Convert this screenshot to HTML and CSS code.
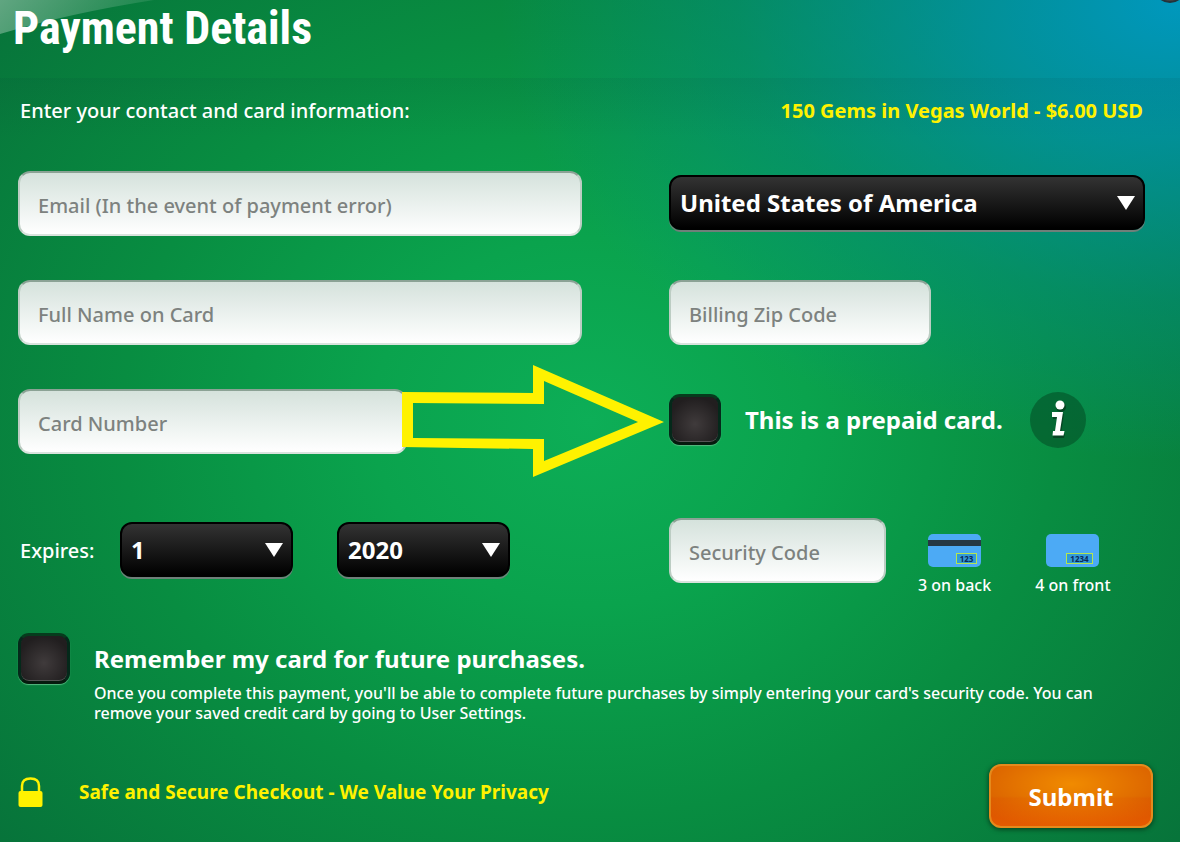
FILE: index.html
```html
<!DOCTYPE html>
<html lang="en">
<head>
<meta charset="utf-8">
<meta name="viewport" content="width=device-width, initial-scale=1">
<title>Payment Details</title>
<link rel="stylesheet" href="styles.css">
</head>
<body>
<main class="dialog">
  <svg class="shine" viewBox="0 0 160 36" aria-hidden="true">
    <defs><linearGradient id="shine" x1="0" y1="0" x2="1" y2="0.2"><stop offset="0" stop-color="#fff" stop-opacity=".36"/><stop offset="1" stop-color="#fff" stop-opacity=".08"/></linearGradient></defs>
    <path d="M0 0H154Q70 13 0 34Z" fill="url(#shine)"/>
  </svg>
  <button class="close" type="button" aria-label="Close"></button>
  <header class="dialog-header">
    <h1 class="title">Payment Details</h1>
  </header>
  <form class="form">
    <div class="intro">
      <p class="lead">Enter your contact and card information:</p>
      <p class="highlight">150 Gems in Vegas World - $6.00 USD</p>
    </div>
    <div class="fields">
      <input class="field" type="email" aria-label="Email" placeholder="Email (In the event of payment error)">
      <div class="select-box country">
        <select class="select" aria-label="Country"><option>United States of America</option></select>
        <svg class="caret" viewBox="0 0 18 14" aria-hidden="true"><path d="M0 0H18L9 14Z"/></svg>
      </div>
      <input class="field" type="text" aria-label="Full Name on Card" placeholder="Full Name on Card">
      <input class="field zip" type="text" aria-label="Billing Zip Code" placeholder="Billing Zip Code">
      <div class="number-cell">
        <input class="field number" type="text" aria-label="Card Number" placeholder="Card Number">
        <svg class="pointer" viewBox="0 0 262 112" aria-hidden="true"><path fill-rule="evenodd" d="M0 27L131 28V0L262 57L131 112V84L0 82ZM11 38V73L142 74V96L236 57L142 16V39Z"/></svg>
      </div>
      <div class="prepaid">
        <label class="check-label"><input class="check" type="checkbox">This is a prepaid card.</label>
        <button class="info" type="button" aria-label="About prepaid cards">
          <svg viewBox="0 0 56 56" aria-hidden="true"><g class="info-shadow" transform="translate(1 2)"><circle cx="30" cy="13" r="5"/><path d="M22 20H33L30 40H34L33 44H22L23 39H25L27 25H22Z"/></g><g class="info-mark"><circle cx="30" cy="13" r="4.500"/><path d="M22 20H33L30 39H34.500L33.500 43.500H22.500L23 39H25L27 25H22Z"/></g></svg>
        </button>
      </div>
      <div class="expiry">
        <span class="lead">Expires:</span>
        <div class="select-box">
          <select class="select" aria-label="Expiry month"><option>1</option></select>
          <svg class="caret" viewBox="0 0 18 14" aria-hidden="true"><path d="M0 0H18L9 14Z"/></svg>
        </div>
        <div class="select-box">
          <select class="select" aria-label="Expiry year"><option>2020</option></select>
          <svg class="caret" viewBox="0 0 18 14" aria-hidden="true"><path d="M0 0H18L9 14Z"/></svg>
        </div>
      </div>
      <div class="security">
        <input class="field code" type="text" aria-label="Security Code" placeholder="Security Code">
        <div class="hints">
          <div class="hint">
            <svg class="card" viewBox="0 0 53 33" aria-hidden="true"><rect width="53" height="33" rx="5" fill="#4caaf5"/><path d="M0 6H53V12H0Z" fill="#263844"/><rect x="28.500" y="19.500" width="20" height="10" fill="#329bd8" stroke="#b4e650"/><text class="digits" x="38.500" y="27.500">123</text></svg>
            <span>3 on back</span>
          </div>
          <div class="hint">
            <svg class="card" viewBox="0 0 53 33" aria-hidden="true"><rect width="53" height="33" rx="5" fill="#4caaf5"/><rect x="20.500" y="19.500" width="26" height="10" fill="#329bd8" stroke="#b4e650"/><text class="digits" x="33.500" y="27.500">1234</text></svg>
            <span>4 on front</span>
          </div>
        </div>
      </div>
    </div>
    <div class="remember">
      <input class="check" type="checkbox" id="remember" aria-describedby="remember-note">
      <div class="remember-text">
        <label class="check-label" for="remember">Remember my card for future purchases.</label>
        <p class="note" id="remember-note">Once you complete this payment, you'll be able to complete future purchases by simply entering your card's security code. You can remove your saved credit card by going to User Settings.</p>
      </div>
    </div>
    <footer class="footer">
      <div class="secure">
        <svg class="lock" viewBox="0 0 24 30" aria-hidden="true"><path d="M3.500 15V9Q3.500 1.500 12 1.500T20.500 9V15" fill="none" stroke="#fff200" stroke-width="2.500"/><rect y="14" width="24" height="16" rx="2" fill="#fff200"/></svg>
        <p class="highlight">Safe and Secure Checkout - We Value Your Privacy</p>
      </div>
      <button class="submit" type="submit">Submit</button>
    </footer>
  </form>
</main>
</body>
</html>
```

FILE: styles.css
```css
* { box-sizing: border-box; }
body {
  margin: 0;
  font-family: "Noto Sans", sans-serif;
  font-weight: 500;
  color: #fff;
}
h1, p { margin: 0; }
button, input, select { font: inherit; color: inherit; margin: 0; }

.dialog {
  position: relative;
  overflow: hidden;
  min-height: 100vh;
  background:
    radial-gradient(ellipse 680px 460px at 100% 0, #0098be 0%, rgba(0, 150, 180, .75) 30%, rgba(0, 145, 150, .4) 65%, rgba(0, 140, 120, 0) 100%),
    radial-gradient(ellipse 66% 78% at 50% 50%, #0dae57 0%, #0aa34d 28%, #088d41 60%, #07733a 100%);
}
.shine { position: absolute; top: 0; left: 0; width: 160px; height: 36px; }
.close {
  position: absolute;
  top: -29px;
  right: -6px;
  width: 32px;
  height: 32px;
  padding: 0;
  border: 2px solid #23343c;
  border-radius: 50%;
  background: #444;
}
.dialog-header { position: relative; height: 78px; padding: 0 13px; }
.title {
  font-family: "Roboto Condensed", "Open Sans Condensed", "Noto Sans", sans-serif;
  font-size: 46px;
  line-height: 56px;
  font-weight: 700;
}
.form {
  padding: 17px 27px 14px 18px;
  background: linear-gradient(rgba(0, 50, 50, .08), rgba(0, 50, 50, 0) 60px);
}
.intro {
  display: flex;
  justify-content: space-between;
  margin: 0 10px 44px 2px;
}
.lead { font-size: 20px; line-height: 32px; white-space: nowrap; }
.highlight { font-size: 20px; line-height: 32px; font-weight: 700; color: #fff200; }

.fields {
  display: grid;
  grid-template-columns: 564fr 476fr;
  column-gap: 87px;
  row-gap: 44px;
  align-items: center;
  margin-right: 8px;
}
.field {
  width: 100%;
  height: 65px;
  padding: 4px 18px 0;
  border: 2px solid;
  border-color: #8ba295 #bccdc3 #d9e3dd;
  border-radius: 12px;
  background: linear-gradient(#d5e2dc, #fff);
  font-size: 20px;
  color: #333;
}
.field::placeholder { color: #7d827f; opacity: 1; }
.zip { width: 55%; }
.number { width: 69%; }
.number-cell { position: relative; }
.pointer {
  position: absolute;
  z-index: 1;
  top: -24px;
  left: 68%;
  width: 262px;
  height: 112px;
  fill: #fff200;
  pointer-events: none;
}
.select-box { position: relative; }
.select {
  display: block;
  width: 100%;
  height: 55px;
  padding: 0 40px 0 9px;
  appearance: none;
  border: 2px solid #000;
  border-radius: 12px;
  background: linear-gradient(#333, #000);
  box-shadow: 0 2px 0 #6f7f79;
  font-size: 24px;
  font-weight: 700;
}
.country, .expiry .select-box { padding-bottom: 2px; }
.caret {
  position: absolute;
  top: 21px;
  right: 10px;
  width: 18px;
  height: 14px;
  fill: #fff;
  pointer-events: none;
}
.prepaid { display: flex; align-items: center; gap: 27px; padding-bottom: 4px; }
.check-label {
  display: flex;
  align-items: center;
  gap: 24px;
  font-size: 24px;
  line-height: 32px;
  font-weight: 700;
  white-space: nowrap;
}
.check {
  flex: none;
  width: 52px;
  height: 51px;
  appearance: none;
  border: 3px solid;
  border-color: #063c1d #04291a #061a0e;
  border-radius: 11px;
  background: radial-gradient(circle at 50% 60%, #403b3c, #211e1f 75%);
  box-shadow: inset 0 -1px 0 #555, 0 1px 1px #58b980;
}
.check:checked { background: radial-gradient(circle, #fff200 30%, #211e1f 34%); }
.info {
  width: 56px;
  height: 56px;
  padding: 0;
  border: 0;
  border-radius: 50%;
  background: rgba(4, 80, 38, .6);
}
.info svg { display: block; }
.info-mark { fill: #fff; }
.info-shadow { fill: #064523; }

.expiry {
  display: grid;
  grid-template-columns: 56px 173px 173px;
  column-gap: 44px;
  align-items: center;
  margin: 20px 0 0 2px;
}
.security {
  display: flex;
  align-items: center;
  gap: 32px;
  margin-top: 20px;
}
.code { width: 217px; }
.hints { display: flex; gap: 44px; padding-top: 16px; margin-bottom: -14px; }
.hint {
  display: flex;
  flex-direction: column;
  align-items: center;
  gap: 6px;
  font-size: 16px;
  line-height: 24px;
  white-space: nowrap;
}
.card { width: 53px; height: 33px; }
.digits { font-size: 8px; font-weight: 700; fill: #0b2755; text-anchor: middle; }

.remember {
  display: flex;
  gap: 24px;
  margin-top: 50px;
}
.remember-text { padding: 10px 32px 0 0; }
.note { font-size: 16px; line-height: 20px; margin-top: 8px; }

.footer {
  display: flex;
  align-items: center;
  justify-content: space-between;
  margin-top: 41px;
}
.secure {
  display: flex;
  align-items: center;
  gap: 36px;
  padding-bottom: 8px;
}
.secure .highlight { font-size: 19px; }
.lock { width: 25px; height: 30px; }
.submit {
  width: 164px;
  height: 64px;
  border: 2px solid #e58a1c;
  border-radius: 12px;
  background:
    radial-gradient(ellipse 70% 75% at 50% 30%, rgba(255, 165, 0, .65), rgba(255, 140, 0, 0)),
    linear-gradient(#d65a00 50%, #d65200 54%, #e45b00);
  box-shadow: 0 1px 4px 1px #064a22;
  font-size: 24px;
  font-weight: 700;
}
```
